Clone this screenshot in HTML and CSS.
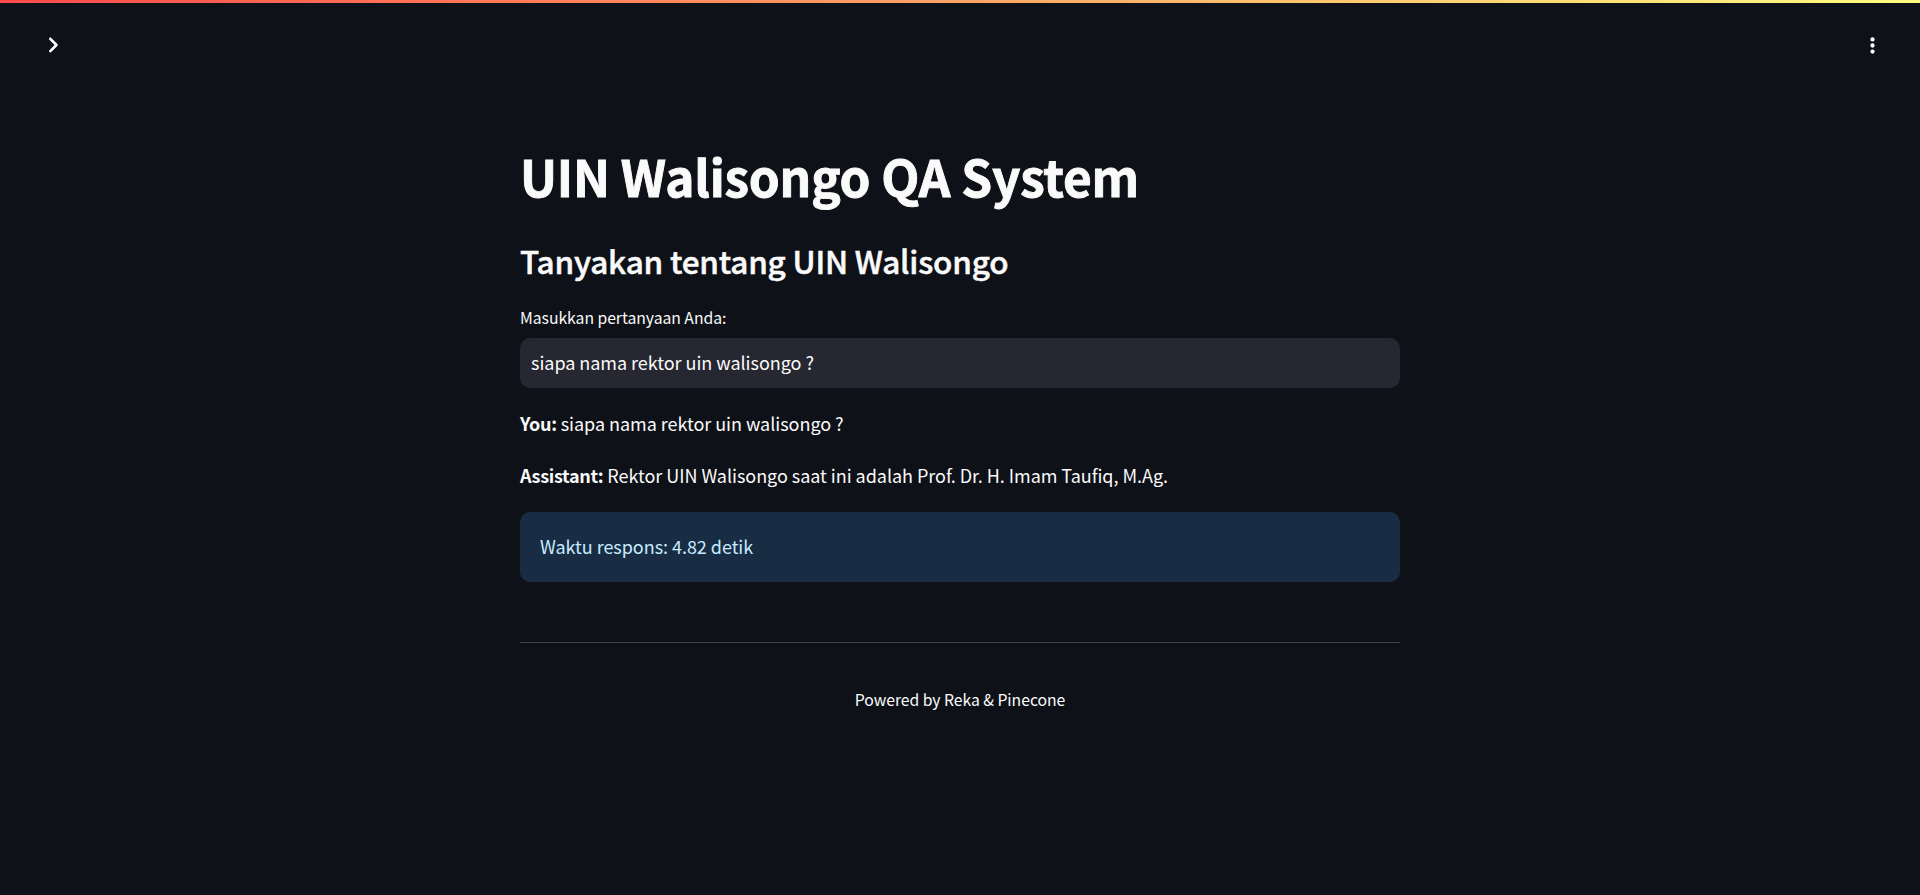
FILE: index.html
```html
<!DOCTYPE html>
<html lang="id">
<head>
<meta charset="utf-8">
<title>UIN Walisongo QA System</title>
<link rel="stylesheet" href="styles.css">
</head>
<body>
<div class="decoration"></div>
<header class="toolbar">
<svg class="icon-expand" viewBox="0 0 24 24" width="32" height="32"><path fill="currentColor" d="M9.29 6.71a.996.996 0 000 1.41L13.17 12l-3.88 3.88a.996.996 0 101.41 1.41l4.59-4.59a.996.996 0 000-1.41L10.7 6.7c-.38-.38-1.02-.38-1.41.01z"/></svg>
<svg class="icon-menu" viewBox="0 0 8 8" width="23" height="23"><path fill="currentColor" d="M3.25 1.9a.75.75 0 1 0 1.5 0a.75.75 0 1 0-1.5 0M3.25 4a.75.75 0 1 0 1.5 0a.75.75 0 1 0-1.5 0M3.25 6.1a.75.75 0 1 0 1.5 0a.75.75 0 1 0-1.5 0"/></svg>
</header>
<main class="content">
<h1 class="title">UIN Walisongo QA System</h1>
<h2 class="subtitle">Tanyakan tentang UIN Walisongo</h2>
<label class="field-label" for="question">Masukkan pertanyaan Anda:</label>
<input class="field" id="question" type="text" value="siapa nama rektor uin walisongo ?">
<p class="message message-user"><strong>You:</strong> siapa nama rektor uin walisongo ?</p>
<p class="message"><strong>Assistant:</strong> Rektor UIN Walisongo saat ini adalah Prof. Dr. H. Imam Taufiq, M.Ag.</p>
<div class="info">Waktu respons: 4.82 detik</div>
<hr class="divider">
<footer class="footer">Powered by Reka &amp; Pinecone</footer>
</main>
</body>
</html>
```
FILE: styles.css
```css
* { box-sizing: border-box; }
body {
  margin: 0;
  height: 895px;
  overflow: hidden;
  background: #0e1117;
  color: #fafafa;
  font-family: "Noto Sans CJK SC", sans-serif;
  font-size: 18px;
  line-height: 32px;
  letter-spacing: -0.04px;
}
.decoration { height: 3px; background: linear-gradient(90deg, #ff4b4b, #fffd80); }
.toolbar {
  height: 84px;
  padding: 0 36px 0 37px;
  display: flex;
  align-items: center;
  justify-content: space-between;
  color: #fff;
}
.content { width: 880px; margin: 0 auto; padding-top: 55px; }
.title {
  margin: 0;
  font-size: 49.5px;
  line-height: 67px;
  font-weight: 700;
  letter-spacing: -0.2px;
  -webkit-text-stroke: 0.9px currentColor;
}
.subtitle {
  margin: 30px 0 0;
  font-size: 31.5px;
  line-height: 42px;
  font-weight: 500;
  letter-spacing: -0.2px;
  -webkit-text-stroke: 0.5px currentColor;
}
.field-label { display: block; margin-top: 23px; font-size: 15.75px; line-height: 27px; }
.field {
  display: block;
  width: 880px;
  height: 50px;
  margin-top: 7px;
  padding: 0 11px 2px;
  border: 0;
  border-radius: 10px;
  background: #262730;
  color: #fafafa;
  font: inherit;
  letter-spacing: inherit;
}
.message { margin: 20px 0 0; }
.message-user { margin-top: 19px; }
.message strong { letter-spacing: -0.32px; }
.info {
  margin-top: 21px;
  height: 70px;
  padding: 18px 20px;
  border-radius: 10px;
  background: #182d43;
  color: #c7ebff;
}
.divider { margin: 60px 0 0; border: 0; height: 1px; background: #404247; }
.footer { margin-top: 41px; text-align: center; font-size: 15.75px; line-height: 31px; }
```
